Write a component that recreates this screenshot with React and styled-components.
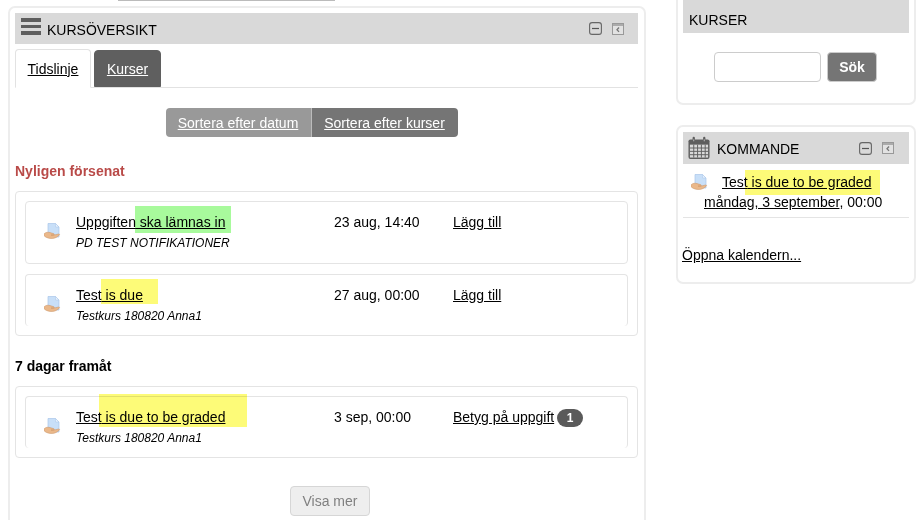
import React from 'react';
import styled, { createGlobalStyle } from 'styled-components';

const GlobalStyle = createGlobalStyle`
  html, body {
    margin: 0;
    height: 520px;
    overflow: hidden;
    background: #fff;
    font-family: "Liberation Sans", Arial, sans-serif;
    font-size: 14px;
    color: #000;
  }
  a {
    color: inherit;
    text-decoration: underline;
  }
`;

const AssignIcon = ({ className }) => (
  <svg className={className} width="17" height="17" viewBox="0 0 17 17">
    <path d="M4 0.500h7.500l3.500 3.500v10h-11z" fill="#c8dff8" stroke="#a9c6ea" strokeWidth="0.7" />
    <path d="M11.500 0.500v3.500h3.500z" fill="#e8f1fb" stroke="#a9c6ea" strokeWidth="0.5" />
    <path d="M0.400 10.500c1.600-1.300 3.600-1.600 5.600-.9l3.600 1c1 .3 .9 1.500-.2 1.500h-2.400l3.200-.1 4.300-1c1-.2 1.400 .6 .7 1.200-1.900 1.700-4.200 3.300-7 3.300-3.200 0-6-.8-7.700-2.300-.7-.6-.9-2-.1-2.700z" fill="#eab88a" stroke="#c99365" strokeWidth="0.5" />
  </svg>
);

const CalendarIcon = () => (
  <svg width="22" height="24" viewBox="0 0 23 24">
    <rect x="0.500" y="3" width="22" height="20.500" rx="2" fill="#5e5e5e" />
    <rect x="2" y="8.500" width="19" height="13.500" fill="#d9d9d9" />
    <path d="M2 12h19M2 15.500h19M2 19h19M6 8.500v13.500M10 8.500v13.500M14 8.500v13.500M18 8.500v13.500" stroke="#5e5e5e" strokeWidth="1" />
    <path d="M6 5V1.500M17 5V1.500" stroke="#5e5e5e" strokeWidth="2.400" strokeLinecap="round" />
    <path d="M6 5V3M17 5V3" stroke="#d9d9d9" strokeWidth="0.8" />
  </svg>
);

const MinusIcon = () => (
  <svg width="13" height="13" viewBox="0 0 13 13">
    <rect x="0.600" y="0.600" width="11.800" height="11.800" rx="2.500" fill="none" stroke="#666" strokeWidth="1.100" />
    <path d="M3 6.500h7" stroke="#555" strokeWidth="1.200" />
  </svg>
);

const DockIcon = () => (
  <svg width="12" height="12" viewBox="0 0 12 12">
    <rect x="0.500" y="0.500" width="11" height="11" fill="#e2e2e2" stroke="#999" strokeWidth="1" />
    <path d="M0.500 2h11" stroke="#999" strokeWidth="1.500" />
    <path d="M7 4.500L5 6.700l2 2.200" fill="none" stroke="#777" strokeWidth="1.300" />
  </svg>
);

const Page = styled.div`
  display: flex;
  align-items: flex-start;
  gap: 30px;
  padding-left: 8px;
  height: 520px;
  overflow: hidden;
`;

const MainColumn = styled.main`
  width: 638px;
  flex: none;
`;

const TopStrip = styled.div`
  width: 217px;
  height: 1px;
  margin-left: 110px;
  background: #bbb;
`;

const Panel = styled.section`
  margin-top: 5px;
  height: 600px;
  padding: 5px 6px 5px 5px;
  box-sizing: border-box;
  border: 2px solid #ededed;
  border-radius: 7px;
`;

const BlockHeader = styled.header`
  display: flex;
  align-items: center;
  height: ${(p) => p.$height || 31}px;
  padding: 0 ${(p) => p.$right || 14}px 0 ${(p) => p.$left || 6}px;
  background: #d9d9d9;
`;

const BlockTitle = styled.h2`
  flex: 1;
  margin: 0;
  padding-top: ${(p) => p.$top || 0}px;
  font-size: 14px;
  font-weight: 400;
  text-transform: uppercase;
`;

const HeaderActions = styled.div`
  display: flex;
  align-items: center;
  gap: ${(p) => p.$gap || 10}px;
`;

const Hamburger = styled.span`
  display: flex;
  flex-direction: column;
  gap: 3px;
  width: 20px;
  margin-right: 6px;
  margin-top: -4px;

  i {
    height: 3.500px;
    background: #5e5e5e;
  }
`;

const Tabs = styled.nav`
  display: flex;
  align-items: flex-end;
  gap: 3px;
  height: 38px;
  margin-top: 5px;
  border-bottom: 1px solid #e2e2e2;
`;

const Tab = styled.a`
  display: flex;
  align-items: center;
  justify-content: center;
  box-sizing: border-box;
  width: ${(p) => p.$width}px;
  height: ${(p) => (p.$active ? 39 : 37)}px;
  margin-bottom: ${(p) => (p.$active ? -1 : 0)}px;
  border: 1px solid ${(p) => (p.$active ? '#e2e2e2' : '#5f5f5f')};
  border-bottom-color: ${(p) => (p.$active ? '#fff' : '#5f5f5f')};
  border-radius: 4px 4px 0 0;
  background: ${(p) => (p.$active ? '#fff' : '#5f5f5f')};
  color: ${(p) => (p.$active ? '#000' : '#fff')};
`;

const SortBar = styled.div`
  display: flex;
  justify-content: center;
  margin: 20px 0 26px;
  padding-right: 30px;
`;

const SortButton = styled.a`
  display: flex;
  align-items: center;
  justify-content: center;
  width: ${(p) => p.$width}px;
  height: 29px;
  background: ${(p) => (p.$active ? '#999' : '#757575')};
  color: #fff;
  border-radius: ${(p) => (p.$active ? '4px 0 0 4px' : '0 4px 4px 0')};
  border-left: ${(p) => (p.$active ? 'none' : '1px solid #bbb')};
  box-sizing: border-box;
`;

const SectionTitle = styled.h3`
  margin: 0 0 11px;
  font-size: 14px;
  line-height: 17px;
  font-weight: 700;
  color: ${(p) => p.$color || '#000'};
`;

const Group = styled.div`
  display: flex;
  flex-direction: column;
  gap: 10px;
  padding: 9px;
  margin-bottom: 22px;
  border: 1px solid #e4e4e4;
  border-radius: 4px;
`;

const Row = styled.article`
  display: grid;
  grid-template-columns: 50px 258px 119px 1fr;
  height: ${(p) => p.$height}px;
  box-sizing: border-box;
  padding-top: 11px;
  border: 1px solid #e4e4e4;
  border-bottom: ${(p) => (p.$closed ? '1px solid #e4e4e4' : 'none')};
  border-radius: 4px;
`;

const RowIcon = styled(AssignIcon)`
  margin: 10px 0 0 18px;
`;

const RowTitle = styled.div`
  line-height: 18px;
`;

const RowSub = styled.div`
  margin-top: 5px;
  font-size: 12px;
  line-height: 15px;
  font-style: italic;
`;

const Mark = styled.span`
  margin-left: -${(p) => p.$pull}px;
  padding: ${(p) => p.$top}px ${(p) => p.$pad}px ${(p) => p.$bottom}px ${(p) => p.$pull}px;
  background: ${(p) => (p.$green ? '#a8fa9c' : '#fdfb78')};
  mix-blend-mode: multiply;
`;

const Badge = styled.span`
  display: inline-block;
  min-width: 26px;
  margin-left: 3px;
  border-radius: 9px;
  background: #5a5a5a;
  color: #fff;
  font-size: 12px;
  font-weight: 700;
  line-height: 18px;
  text-align: center;
`;

const MoreWrap = styled.div`
  display: flex;
  justify-content: center;
  margin: 28px 0 0 7px;
`;

const MoreButton = styled.button`
  width: 80px;
  height: 30px;
  padding: 0;
  border: 1px solid #d6d6d6;
  border-radius: 4px;
  background: #eee;
  color: #808080;
  font: 400 14px "Liberation Sans", Arial, sans-serif;
`;

const Aside = styled.aside`
  width: 240px;
  flex: none;
  margin-top: -20px;
`;

const Card = styled.section`
  box-sizing: border-box;
  padding: 5px;
  margin-bottom: ${(p) => p.$gap || 0}px;
  border: 2px solid #ededed;
  border-radius: 7px;
  height: ${(p) => p.$height}px;
`;

const SearchForm = styled.form`
  display: flex;
  justify-content: center;
  gap: 6px;
  margin-top: 19px;
  padding-right: 1px;
`;

const SearchInput = styled.input`
  box-sizing: border-box;
  width: 107px;
  height: 30px;
  border: 1px solid #ccc;
  border-radius: 4px;
  background: #fff;
`;

const SearchButton = styled.button`
  width: 50px;
  height: 30px;
  padding: 0;
  border: 1px solid #ccc;
  border-radius: 4px;
  background: #757575;
  color: #fff;
  font: 700 14px "Liberation Sans", Arial, sans-serif;
`;

const CalendarSlot = styled.span`
  display: flex;
  margin-right: 7px;
`;

const EventBody = styled.div`
  padding: 8px 0 5px;
  border-bottom: 1px solid #e4e4e4;
  line-height: 20px;
`;

const EventLine = styled.div`
  display: flex;
  align-items: flex-start;
  padding-left: 8px;
`;

const EventIcon = styled(AssignIcon)`
  margin-right: 14px;
  margin-top: 2px;
`;

const EventDate = styled.div`
  padding-left: 21px;
`;

const FooterLink = styled.div`
  margin: 27px 0 0 -1px;
  line-height: 20px;
`;

export default function App() {
  return (
    <Page>
      <GlobalStyle />
      <MainColumn>
        <TopStrip />
        <Panel>
          <BlockHeader>
            <Hamburger><i /><i /><i /></Hamburger>
            <BlockTitle $top={3}>Kursöversikt</BlockTitle>
            <HeaderActions>
              <MinusIcon />
              <DockIcon />
            </HeaderActions>
          </BlockHeader>
          <Tabs>
            <Tab href="#" $active $width={76}>Tidslinje</Tab>
            <Tab href="#" $width={67}>Kurser</Tab>
          </Tabs>
          <SortBar>
            <SortButton href="#" $active $width={145}>Sortera efter datum</SortButton>
            <SortButton href="#" $width={147}>Sortera efter kurser</SortButton>
          </SortBar>
          <SectionTitle $color="#b94a48">Nyligen försenat</SectionTitle>
          <Group>
            <Row $height={63} $closed>
              <RowIcon />
              <div>
                <RowTitle><a href="#">Uppgiften<Mark $green $pull={1} $pad={6} $top={8} $bottom={3}> ska lämnas in</Mark></a></RowTitle>
                <RowSub>PD TEST NOTIFIKATIONER</RowSub>
              </div>
              <RowTitle>23 aug, 14:40</RowTitle>
              <RowTitle><a href="#">Lägg till</a></RowTitle>
            </Row>
            <Row $height={52}>
              <RowIcon />
              <div>
                <RowTitle><a href="#">Test<Mark $pull={1} $pad={15} $top={8} $bottom={1}> is due</Mark></a></RowTitle>
                <RowSub>Testkurs 180820 Anna1</RowSub>
              </div>
              <RowTitle>27 aug, 00:00</RowTitle>
              <RowTitle><a href="#">Lägg till</a></RowTitle>
            </Row>
          </Group>
          <SectionTitle>7 dagar framåt</SectionTitle>
          <Group>
            <Row $height={52}>
              <RowIcon />
              <div>
                <RowTitle><a href="#">Test<Mark $pull={3} $pad={22} $top={15} $bottom={2}> is due to be graded</Mark></a></RowTitle>
                <RowSub>Testkurs 180820 Anna1</RowSub>
              </div>
              <RowTitle>3 sep, 00:00</RowTitle>
              <RowTitle><a href="#">Betyg på uppgift</a><Badge>1</Badge></RowTitle>
            </Row>
          </Group>
          <MoreWrap>
            <MoreButton type="button">Visa mer</MoreButton>
          </MoreWrap>
        </Panel>
      </MainColumn>
      <Aside>
        <Card $height={125} $gap={20}>
          <BlockHeader $height={46}>
            <BlockTitle $top={20}>Kurser</BlockTitle>
          </BlockHeader>
          <SearchForm>
            <SearchInput type="text" />
            <SearchButton type="button">Sök</SearchButton>
          </SearchForm>
        </Card>
        <Card $height={159}>
          <BlockHeader $height={32} $left={5} $right={15}>
            <CalendarSlot><CalendarIcon /></CalendarSlot>
            <BlockTitle $top={2}>Kommande</BlockTitle>
            <HeaderActions>
              <MinusIcon />
              <DockIcon />
            </HeaderActions>
          </BlockHeader>
          <EventBody>
            <EventLine>
              <EventIcon />
              <a href="#">Test<Mark $pull={3} $pad={9} $top={4} $bottom={5}> is due to be graded</Mark></a>
            </EventLine>
            <EventDate><a href="#">måndag, 3 september</a>, 00:00</EventDate>
          </EventBody>
          <FooterLink><a href="#">Öppna kalendern...</a></FooterLink>
        </Card>
      </Aside>
    </Page>
  );
}
